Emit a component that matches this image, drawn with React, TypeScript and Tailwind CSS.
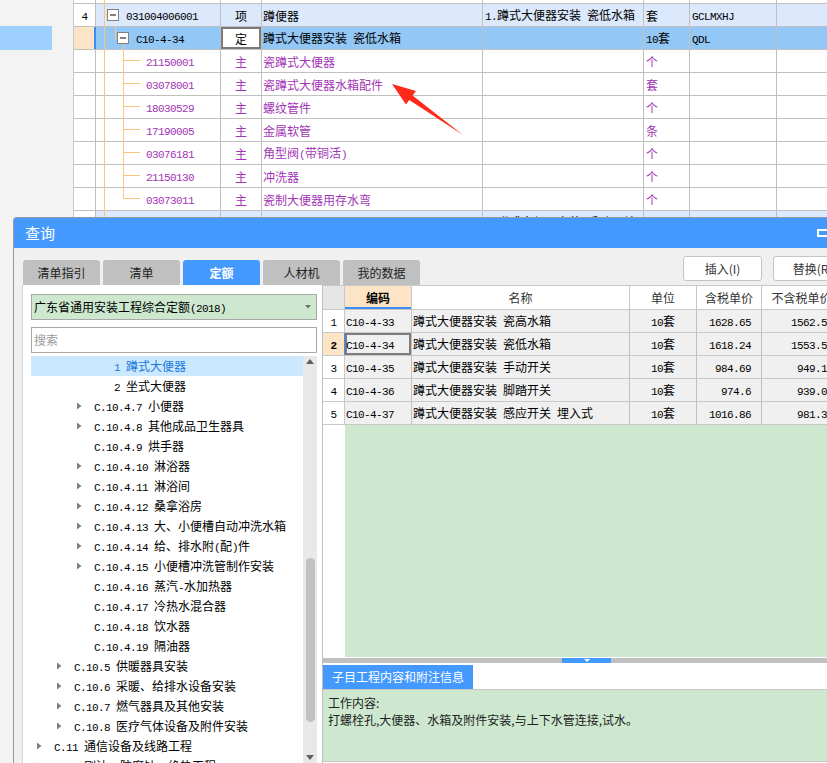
import React from "react";

const CJK_RE = /[\u2E80-\u9FFF\u3000-\u303F\uFF00-\uFFEF]/;

function M({ t }: { t: string }) {
  const runs: { s: string; c: boolean }[] = [];
  for (const ch of Array.from(t)) {
    const c = CJK_RE.test(ch);
    const last = runs[runs.length - 1];
    if (last && last.c === c) last.s += ch;
    else runs.push({ s: ch, c });
  }
  return (
    <span className="whitespace-pre leading-[16px]">
      {runs.map((r, i) =>
        r.c ? (
          <span key={i} className="font-['Noto_Sans_CJK_SC',sans-serif] text-[12px]">
            {r.s}
          </span>
        ) : (
          <span key={i} className="font-['Liberation_Mono',monospace] text-[11px] tracking-[-0.6px]">
            {r.s}
          </span>
        )
      )}
    </span>
  );
}

type MainRow = {
  kind: "light" | "sel" | "child";
  num?: string;
  code?: string;
  type?: string;
  name?: string;
  desc?: string;
  unit?: string;
  c2?: string;
};

const mainRows: MainRow[] = [
  { kind: "light", num: "4", code: "031004006001", type: "项", name: "蹲便器", desc: "1.蹲式大便器安装 瓷低水箱", unit: "套", c2: "GCLMXHJ" },
  { kind: "sel", code: "C10-4-34", type: "定", name: "蹲式大便器安装 瓷低水箱", unit: "10套", c2: "QDL" },
  { kind: "child", code: "21150001", type: "主", name: "瓷蹲式大便器", unit: "个" },
  { kind: "child", code: "03078001", type: "主", name: "瓷蹲式大便器水箱配件", unit: "套" },
  { kind: "child", code: "18030529", type: "主", name: "螺纹管件", unit: "个" },
  { kind: "child", code: "17190005", type: "主", name: "金属软管", unit: "条" },
  { kind: "child", code: "03076181", type: "主", name: "角型阀(带铜活)", unit: "个" },
  { kind: "child", code: "21150130", type: "主", name: "冲洗器", unit: "个" },
  { kind: "child", code: "03073011", type: "主", name: "瓷制大便器用存水弯", unit: "个" },
  { kind: "light", desc: "1.蹲式大便器安装 手动开关" },
];

const cell = "shrink-0 h-full border-r border-[#c0c0c0] flex items-center overflow-hidden";

function MainTable() {
  return (
    <div className="flex-1 bg-white">
      <div className="flex h-[4px] border-b border-[#c0c0c0]">
        <div className={`${cell} w-[22px]`} />
        <div className={`${cell} w-[125px]`} />
        <div className={`${cell} w-[41px]`} />
        <div className={`${cell} w-[221px]`} />
        <div className={`${cell} w-[161px]`} />
        <div className={`${cell} w-[46px]`} />
        <div className={`${cell} w-[87px]`} />
        <div className={`${cell} w-[60px]`} />
      </div>
      {mainRows.map((r, i) => {
        const bg = r.kind === "light" ? "bg-[#dce8fb]" : r.kind === "sel" ? "bg-[#93c7f5]" : "bg-white";
        const color = r.kind === "child" ? "text-[#a235b6]" : "text-black";
        const codePad = r.kind === "light" ? "pl-[30px]" : r.kind === "sel" ? "pl-[40px]" : "pl-[50px]";
        return (
          <div key={i} className={`flex h-[23px] border-b border-[#c0c0c0] ${color}`}>
            {r.kind === "sel" ? (
              <div className="shrink-0 h-full w-[22px] border-r-2 border-[#3d8cf5] bg-[#fde4c6]" />
            ) : (
              <div className={`${cell} w-[22px] justify-center bg-white`}>{r.num && <M t={r.num} />}</div>
            )}
            <div className={`${cell} w-[125px] ${bg} ${codePad}`}>{r.code && <M t={r.code} />}</div>
            {r.kind === "sel" ? (
              <div className={`${cell} w-[41px] justify-center bg-white shadow-[inset_0_0_0_2px_#7a7a7a]`}>
                <M t={r.type || ""} />
              </div>
            ) : (
              <div className={`${cell} w-[41px] justify-center ${bg}`}>{r.type && <M t={r.type} />}</div>
            )}
            <div className={`${cell} w-[221px] pl-[1px] ${bg}`}>{r.name && <M t={r.name} />}</div>
            <div className={`${cell} w-[161px] pl-[2px] ${bg}`}>{r.desc && <M t={r.desc} />}</div>
            <div className={`${cell} w-[46px] pl-[2px] ${bg}`}>{r.unit && <M t={r.unit} />}</div>
            <div className={`${cell} w-[87px] pl-[2px] ${bg}`}>{r.c2 && <M t={r.c2} />}</div>
            <div className={`${cell} w-[60px] ${bg}`} />
          </div>
        );
      })}
    </div>
  );
}

function TreeLines() {
  const childYs = [60.5, 83.5, 106.5, 129.5, 152.5, 175.5, 198.5];
  return (
    <svg className="absolute left-0 top-0 pointer-events-none" width="827" height="217" viewBox="0 0 827 217">
      <g stroke="#fbc57e" strokeWidth="1" fill="none">
        <line x1="104.5" y1="0" x2="104.5" y2="217" />
        <line x1="104.5" y1="14.5" x2="107.5" y2="14.5" />
        <line x1="115.5" y1="26" x2="115.5" y2="38.5" />
        <line x1="115.5" y1="38.5" x2="117.5" y2="38.5" />
        <line x1="123.5" y1="44" x2="123.5" y2="198.5" />
        {childYs.map((y) => (
          <line key={y} x1="123.5" y1={y} x2="140" y2={y} />
        ))}
      </g>
      <rect x="107.5" y="9.5" width="11" height="11" fill="#fff" stroke="#808080" />
      <line x1="110" y1="15" x2="116" y2="15" stroke="#000" />
      <rect x="117.5" y="32.5" width="11" height="11" fill="#fff" stroke="#808080" />
      <line x1="120" y1="38" x2="126" y2="38" stroke="#000" />
    </svg>
  );
}

function RedArrow() {
  return (
    <svg className="absolute left-0 top-0 pointer-events-none" width="827" height="217" viewBox="0 0 827 217">
      <polygon points="392,84 416,91 412.6,95.6 463,135 409.2,100 406,104.5" fill="#ff2a1c" />
    </svg>
  );
}

type TreeItem = { lvl: 0 | 1 | 2 | 3; t: string; arr?: boolean; sel?: boolean };
const treeItems: TreeItem[] = [
  { lvl: 3, t: "1 蹲式大便器", sel: true },
  { lvl: 3, t: "2 坐式大便器" },
  { lvl: 2, t: "C.10.4.7 小便器", arr: true },
  { lvl: 2, t: "C.10.4.8 其他成品卫生器具", arr: true },
  { lvl: 2, t: "C.10.4.9 烘手器" },
  { lvl: 2, t: "C.10.4.10 淋浴器", arr: true },
  { lvl: 2, t: "C.10.4.11 淋浴间", arr: true },
  { lvl: 2, t: "C.10.4.12 桑拿浴房", arr: true },
  { lvl: 2, t: "C.10.4.13 大、小便槽自动冲洗水箱", arr: true },
  { lvl: 2, t: "C.10.4.14 给、排水附(配)件", arr: true },
  { lvl: 2, t: "C.10.4.15 小便槽冲洗管制作安装", arr: true },
  { lvl: 2, t: "C.10.4.16 蒸汽-水加热器" },
  { lvl: 2, t: "C.10.4.17 冷热水混合器" },
  { lvl: 2, t: "C.10.4.18 饮水器" },
  { lvl: 2, t: "C.10.4.19 隔油器" },
  { lvl: 1, t: "C.10.5 供暖器具安装", arr: true },
  { lvl: 1, t: "C.10.6 采暖、给排水设备安装", arr: true },
  { lvl: 1, t: "C.10.7 燃气器具及其他安装", arr: true },
  { lvl: 1, t: "C.10.8 医疗气体设备及附件安装", arr: true },
  { lvl: 0, t: "C.11 通信设备及线路工程", arr: true },
  { lvl: 0, t: "C.12 刷油、防腐蚀、绝热工程", arr: true },
  { lvl: 0, t: "C.13 消防工程", arr: true },
];

const lvlPad = ["pl-[6px]", "pl-[26px]", "pl-[46px]", "pl-[66px]"];

function LeftPanel() {
  return (
    <div className="w-[300px] shrink-0 h-full bg-white border-l border-[#d4d4d4] pl-[8px] pr-[5px] pt-[9px] flex flex-col overflow-hidden">
      <div className="h-[26px] shrink-0 border border-[#a8a8a8] bg-[#cde8cf] flex items-center pl-[2px] pr-[5px]">
        <M t="广东省通用安装工程综合定额(2018)" />
        <svg className="ml-auto" width="6" height="4" viewBox="0 0 6 4">
          <polygon points="0,0 6,0 3,3.5" fill="#707070" />
        </svg>
      </div>
      <div className="h-[26px] shrink-0 mt-[7px] border border-[#a8a8a8] bg-white flex items-center pl-[2px] text-[12px] text-[#9a9a9a] font-['Noto_Sans_CJK_SC',sans-serif]">
        搜索
      </div>
      <div className="mt-[3px] flex flex-1 min-h-0">
        <div className="flex-1 min-w-0 overflow-hidden">
          {treeItems.map((it, i) => (
            <div
              key={i}
              className={`h-[20px] flex items-center ${lvlPad[it.lvl]} ${it.sel ? "bg-[#cce8ff] text-[#1a78d8]" : "text-black"}`}
            >
              <div className="w-[17px] shrink-0 flex items-center">
                {it.arr && (
                  <svg width="5" height="8" viewBox="0 0 5 8">
                    <polygon points="0,0.5 4.5,4 0,7.5" fill="#808080" />
                  </svg>
                )}
              </div>
              <M t={it.t} />
            </div>
          ))}
        </div>
        <div className="w-[14px] shrink-0 bg-[#e8e8e8] flex flex-col items-center">
          <svg className="mt-[3px]" width="8" height="5" viewBox="0 0 8 5">
            <polygon points="0,5 8,5 4,0" fill="#606060" />
          </svg>
          <div className="mt-[194px] w-[9px] h-[164px] rounded-full bg-[#c1c1c1]" />
          <svg className="mt-[33px]" width="8" height="5" viewBox="0 0 8 5">
            <polygon points="0,0 8,0 4,5" fill="#606060" />
          </svg>
        </div>
      </div>
    </div>
  );
}

const qRows = [
  { n: "1", code: "C10-4-33", name: "蹲式大便器安装 瓷高水箱", unit: "10套", p1: "1628.65", p2: "1562.59" },
  { n: "2", code: "C10-4-34", name: "蹲式大便器安装 瓷低水箱", unit: "10套", p1: "1618.24", p2: "1553.59" },
  { n: "3", code: "C10-4-35", name: "蹲式大便器安装 手动开关", unit: "10套", p1: "984.69", p2: "949.18" },
  { n: "4", code: "C10-4-36", name: "蹲式大便器安装 脚踏开关", unit: "10套", p1: "974.6", p2: "939.08" },
  { n: "5", code: "C10-4-37", name: "蹲式大便器安装 感应开关 埋入式", unit: "10套", p1: "1016.86", p2: "981.38" },
];

const hd = "shrink-0 h-full border-r border-[#c8c8c8] flex items-center justify-center text-[12px] text-[#333] font-['Noto_Sans_CJK_SC',sans-serif]";

function RightPanel() {
  return (
    <div className="flex-1 min-w-0 h-full border-l border-[#c0c0c0] flex flex-col overflow-hidden">
      <div className="flex h-[25px] shrink-0 border-t border-b border-[#c8c8c8] bg-white">
        <div className={`${hd} w-[22px] bg-[#e6e6e6]`} />
        <div className={`${hd} w-[67px] bg-[#fde4c6] text-black font-bold shadow-[inset_0_-2px_0_#3d8cf5]`}>编码</div>
        <div className={`${hd} w-[218px]`}>名称</div>
        <div className={`${hd} w-[67px]`}>单位</div>
        <div className={`${hd} w-[65px]`}>含税单价</div>
        <div className={`${hd} w-[80px]`}>不含税单价</div>
      </div>
      {qRows.map((r) => {
        const sel = r.n === "2";
        return (
          <div key={r.n} className="flex h-[23px] shrink-0 border-b border-[#c8c8c8] text-black">
            <div
              className={`shrink-0 h-full w-[22px] flex items-center justify-center border-r ${
                sel ? "bg-[#fde4c6] border-[#3d8cf5] font-bold" : "bg-white border-[#c8c8c8]"
              }`}
            >
              <M t={r.n} />
            </div>
            <div className={`${cell} w-[67px] pl-[1px] ${sel ? "shadow-[inset_0_0_0_2px_#7d7d7d]" : ""}`}>
              <M t={r.code} />
            </div>
            <div className={`${cell} w-[218px] pl-[1px]`}>
              <M t={r.name} />
            </div>
            <div className={`${cell} w-[67px] justify-center`}>
              <M t={r.unit} />
            </div>
            <div className={`${cell} w-[65px] justify-end pr-[10px]`}>
              <M t={r.p1} />
            </div>
            <div className={`${cell} w-[80px] justify-end pr-[8px]`}>
              <M t={r.p2} />
            </div>
          </div>
        );
      })}
      <div className="flex h-[232px] shrink-0">
        <div className="w-[22px] shrink-0 bg-white" />
        <div className="flex-1 bg-[#cde8cf]" />
      </div>
      <div className="h-[1px] shrink-0 bg-white" />
      <div className="h-[5px] shrink-0 bg-[#c0c0c0] flex">
        <div className="ml-[239px] w-[49px] h-full bg-[#4499ff] flex justify-center">
          <svg className="mt-[1px]" width="6" height="3" viewBox="0 0 6 3">
            <polygon points="0,0 6,0 3,3" fill="#fff" />
          </svg>
        </div>
      </div>
      <div className="h-[27px] shrink-0 bg-white border-b border-[#c8c8c8] pt-[2px]">
        <div className="w-[150px] h-[24px] bg-[#4499ff] flex items-center pl-[9px] text-white text-[12px] font-['Noto_Sans_CJK_SC',sans-serif]">
          子目工程内容和附注信息
        </div>
      </div>
      <div className="h-[72px] shrink-0 bg-[#cde8cf] border-b border-[#c8c8c8] pl-[5px] pt-[4px] text-[12px] leading-[17px] text-[#222] font-['Noto_Sans_CJK_SC',sans-serif]">
        <div>工作内容:</div>
        <div>打螺栓孔,大便器、水箱及附件安装,与上下水管连接,试水。</div>
      </div>
      <div className="flex-1 bg-white" />
    </div>
  );
}

function Dialog() {
  const tabs = ["清单指引", "清单", "定额", "人材机", "我的数据"];
  return (
    <div className="absolute left-[13px] top-[217px] w-[840px] h-[560px] border border-[#9a9a9a] rounded-t-[3px] bg-[#f0f0f0] flex flex-col overflow-hidden">
      <div className="relative h-[30px] shrink-0 bg-[#4499ff] flex items-center pl-[11px] text-white text-[15px] font-['Noto_Sans_CJK_SC',sans-serif]">
        查询
        <div className="absolute left-[803px] top-[11px] w-[13px] h-[8px] border-2 border-white" />
      </div>
      <div className="h-[37px] shrink-0 flex items-start pl-[9px]">
        <div className="mt-[12px] flex gap-[3px]">
          {tabs.map((t) => (
            <div
              key={t}
              className={`w-[77px] h-[25px] rounded-t-[3px] flex items-center justify-center text-[12px] font-['Noto_Sans_CJK_SC',sans-serif] ${
                t === "定额" ? "bg-[#4499ff] text-white font-bold" : "bg-[#c0c0c0] text-[#222]"
              }`}
            >
              {t}
            </div>
          ))}
        </div>
        <div className="ml-[263px] mt-[8px] flex gap-[11px]">
          <div className="w-[79px] h-[25px] bg-white border border-[#c4c4c4] rounded-[3px] flex items-center justify-center text-[12px] text-[#333] font-['Noto_Sans_CJK_SC',sans-serif]">
            插入(I)
          </div>
          <div className="w-[79px] h-[25px] bg-white border border-[#c4c4c4] rounded-[3px] flex items-center justify-center text-[12px] text-[#333] font-['Noto_Sans_CJK_SC',sans-serif]">
            替换(R)
          </div>
        </div>
      </div>
      <div className="flex h-[478px] shrink-0 pl-[8px]">
        <LeftPanel />
        <RightPanel />
      </div>
    </div>
  );
}

export default function App() {
  return (
    <div className="relative w-[827px] h-[763px] overflow-hidden bg-[#f3f3f3]">
      <div className="flex h-full">
        <div className="w-[74px] shrink-0 h-full border-r border-[#c8c8c8] bg-[#f3f3f3] pt-[26px]">
          <div className="w-[52px] h-[24px] bg-[#9dd0fd]" />
        </div>
        <MainTable />
      </div>
      <TreeLines />
      <RedArrow />
      <Dialog />
    </div>
  );
}
